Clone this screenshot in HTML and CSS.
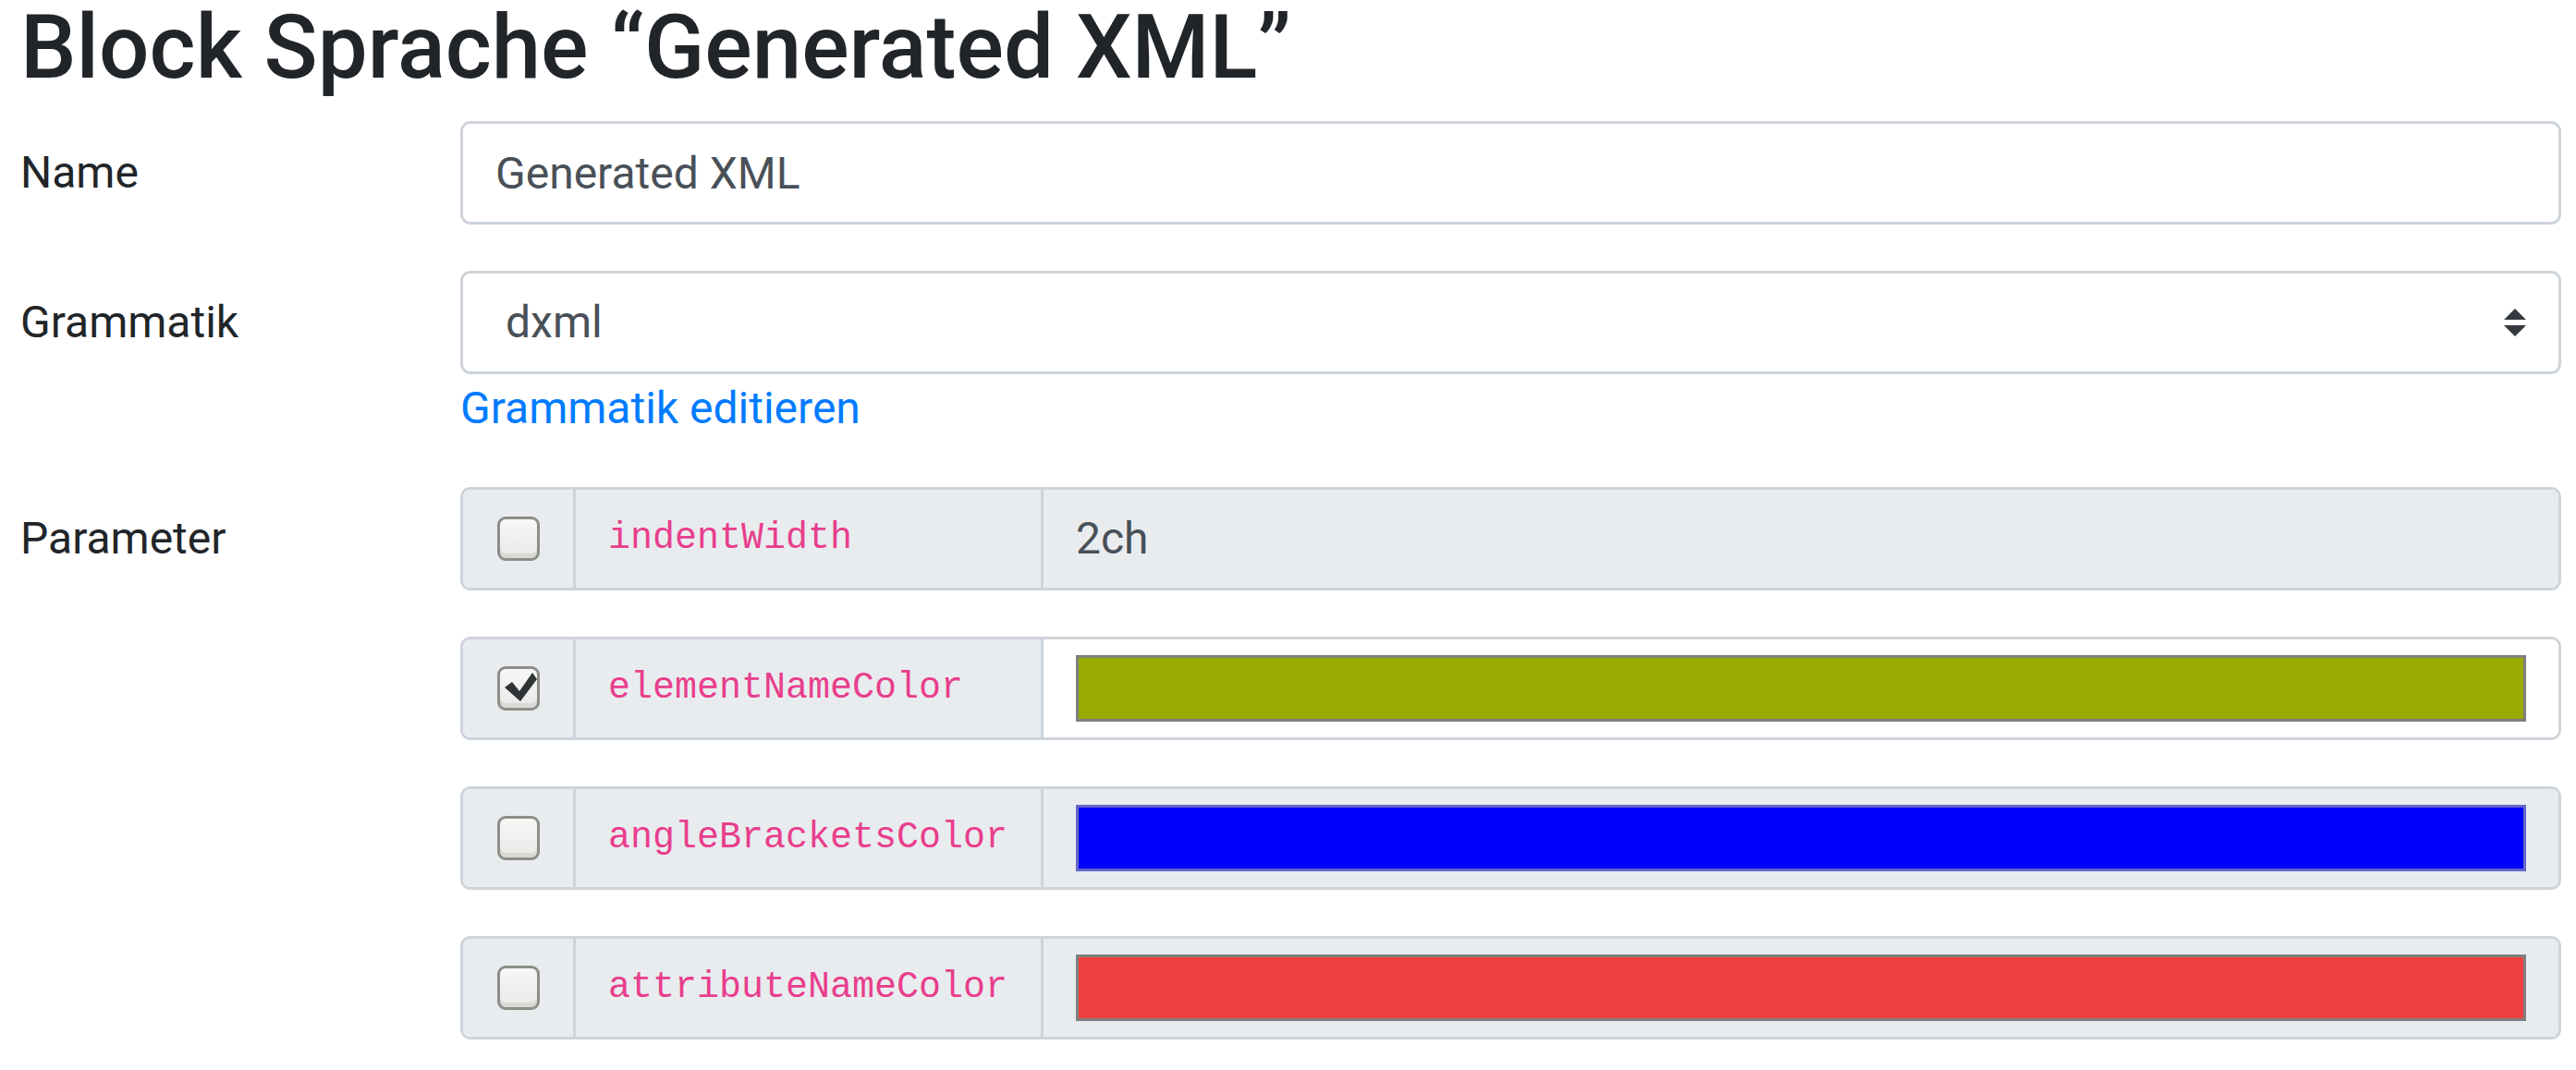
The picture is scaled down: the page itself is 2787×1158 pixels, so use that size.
FILE: index.html
```html
<!DOCTYPE html>
<html lang="de">
<head>
<meta charset="utf-8">
<title>Block Sprache “Generated XML”</title>
<link rel="stylesheet" href="styles.css">
</head>
<body>
<main class="page">
  <h1 class="title">Block Sprache “Generated XML”</h1>

  <div class="form-row">
    <label class="form-label" for="name">Name</label>
    <div class="form-col">
      <input id="name" class="text-input" type="text" value="Generated XML">
    </div>
  </div>

  <div class="form-row">
    <label class="form-label" for="grammar">Grammatik</label>
    <div class="form-col">
      <div class="select-wrap">
        <select id="grammar" class="text-input select-input"><option>dxml</option></select>
        <svg class="select-arrow" viewBox="0 0 4 5" aria-hidden="true"><path d="M2 0L0 2h4zm0 5L0 3h4z"/></svg>
      </div>
      <a class="edit-link" href="#">Grammatik editieren</a>
    </div>
  </div>

  <div class="form-row">
    <span class="form-label">Parameter</span>
    <div class="form-col">
      <div class="param">
        <div class="param-check"><span class="checkbox"></span></div>
        <div class="param-name"><code>indentWidth</code></div>
        <div class="param-value is-disabled"><span class="value-text">2ch</span></div>
      </div>
      <div class="param">
        <div class="param-check"><span class="checkbox is-checked"><svg class="check-mark" viewBox="0 0 40 42" aria-hidden="true"><path d="M3 17 L11 11 L19 21 L33 1 L38 8 L20 32 Z"/></svg></span></div>
        <div class="param-name"><code>elementNameColor</code></div>
        <div class="param-value"><span class="swatch swatch-olive"></span></div>
      </div>
      <div class="param">
        <div class="param-check"><span class="checkbox"></span></div>
        <div class="param-name"><code>angleBracketsColor</code></div>
        <div class="param-value is-disabled"><span class="swatch swatch-blue"></span></div>
      </div>
      <div class="param">
        <div class="param-check"><span class="checkbox"></span></div>
        <div class="param-name"><code>attributeNameColor</code></div>
        <div class="param-value is-disabled"><span class="swatch swatch-red"></span></div>
      </div>
    </div>
  </div>
</main>
</body>
</html>
```

FILE: styles.css
```css
html, body {
  margin: 0;
  background: #fff;
}

body {
  font-family: Roboto, "Liberation Sans", sans-serif;
  font-size: 48px;
  line-height: 70px;
  color: #212529;
}

.page {
  padding: 0 16px 0 22px;
}

.title {
  font-size: 96px;
  font-weight: 500;
  line-height: 102px;
  margin: 0 0 29px;
  color: #212529;
}

.form-row {
  display: grid;
  grid-template-columns: 476px 1fr;
  margin-bottom: 50px;
}

.form-label {
  padding-top: 21px;
  line-height: 70px;
}

.text-input {
  display: block;
  width: 100%;
  box-sizing: border-box;
  height: 112px;
  margin: 0;
  padding: 0 35px;
  border: 3px solid #ced4da;
  border-radius: 11px;
  background: #fff;
  font: inherit;
  color: #495057;
  outline: none;
}

.select-wrap {
  position: relative;
}

.select-input {
  -webkit-appearance: none;
  appearance: none;
  padding-left: 46px;
}

.select-arrow {
  position: absolute;
  right: 38px;
  top: 41px;
  width: 24px;
  height: 30px;
  fill: #343a40;
  pointer-events: none;
}

.edit-link {
  display: block;
  margin-top: 2px;
  line-height: 70px;
  color: #007bff;
  text-decoration: none;
}

.param {
  display: flex;
  height: 112px;
  box-sizing: border-box;
  border: 3px solid #ced4da;
  border-radius: 11px;
  overflow: hidden;
  margin-bottom: 50px;
}

.param:last-child {
  margin-bottom: 0;
}

.param-check {
  flex: none;
  width: 119px;
  background: #e9ecef;
  display: flex;
  align-items: center;
  justify-content: center;
}

.param-name {
  flex: none;
  width: 506px;
  box-sizing: border-box;
  border-left: 3px solid #ced4da;
  background: #e9ecef;
  padding-left: 35px;
  display: flex;
  align-items: center;
}

.param-value {
  flex: 1;
  border-left: 3px solid #ced4da;
  background: #fff;
  padding: 0 35px;
  display: flex;
  align-items: center;
}

.param-value.is-disabled {
  background: #e9ecef;
}

code {
  font-family: "Liberation Mono", "Courier New", monospace;
  font-size: 40px;
  color: #e83e8c;
}

.value-text {
  color: #495057;
}

.checkbox {
  position: relative;
  display: block;
  width: 46px;
  height: 48px;
  box-sizing: border-box;
  border: 3px solid #8e8e89;
  border-radius: 9px;
  background: linear-gradient(#f7f7f6, #e9e9e7);
  box-shadow: inset 0 -5px 0 #d9d9d5;
}

.check-mark {
  position: absolute;
  left: 2px;
  top: 3px;
  width: 40px;
  height: 42px;
  fill: #2e3436;
  filter: blur(0.7px);
}

.swatch {
  flex: 1;
  height: 72px;
  box-sizing: border-box;
  border: 3px solid #7f7f7f;
}

.swatch-olive {
  background: #99ab00;
}

.swatch-blue {
  background: #0000ff;
  border-color: #6565c9;
}

.swatch-red {
  background: #ef4040;
}
```
